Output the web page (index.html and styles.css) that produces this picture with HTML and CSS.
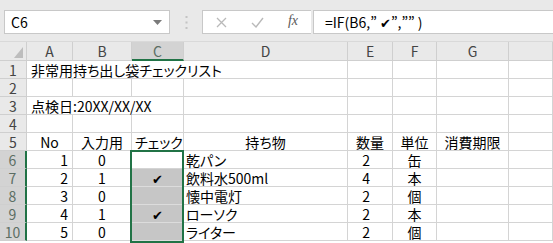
FILE: index.html
```html
<!DOCTYPE html>
<html lang="ja">

<head>
    <meta charset="UTF-8" />
    <title>非常用持ち出し袋チェックリスト</title>
    <link rel="stylesheet" href="styles.css">
</head>

<body>
    <div class="topbar">
        <div class="namebox">
            <span>C6</span>
            <svg width="9" height="5" viewBox="0 0 9 5"><path d="M0 0h9L4.5 5z" fill="#7a7a7a" /></svg>
        </div>
        <div class="grip">
            <svg width="3" height="13" viewBox="0 0 3 13">
                <rect x="0.5" y="0" width="2" height="2" fill="#c4c4c4" />
                <rect x="0.5" y="5.5" width="2" height="2" fill="#c4c4c4" />
                <rect x="0.5" y="11" width="2" height="2" fill="#c4c4c4" />
            </svg>
        </div>
        <div class="tools">
            <span class="tool">
                <svg width="11" height="11" viewBox="0 0 11 11"><path d="M1 1l9 9M10 1l-9 9" stroke="#b9b9b9" stroke-width="1.3" fill="none" /></svg>
            </span>
            <span class="tool">
                <svg width="13" height="11" viewBox="0 0 13 11"><path d="M1 6l4 4 7-9" stroke="#b9b9b9" stroke-width="1.4" fill="none" /></svg>
            </span>
            <span class="tool fx">fx</span>
        </div>
        <div class="formula">=IF(B6,” <span class="chk">✔</span>”,”” )</div>
    </div>

    <div class="sheet">
        <!-- column headers -->
        <div class="corner">
            <svg width="9" height="11" viewBox="0 0 9 11"><path d="M9 0v11H0z" fill="#bdbdbd" /></svg>
        </div>
        <div class="ch">A</div>
        <div class="ch">B</div>
        <div class="ch on">C</div>
        <div class="ch">D</div>
        <div class="ch">E</div>
        <div class="ch">F</div>
        <div class="ch">G</div>
        <div class="ch"></div>

        <!-- 1 -->
        <div class="rh">1</div>
        <div class="c span4">非常用持ち出し袋チェックリスト</div>
        <div class="c"></div><div class="c"></div><div class="c"></div><div class="c"></div>

        <!-- 2 -->
        <div class="rh">2</div>
        <div class="c"></div><div class="c"></div><div class="c"></div><div class="c"></div>
        <div class="c"></div><div class="c"></div><div class="c"></div><div class="c"></div>

        <!-- 3 -->
        <div class="rh">3</div>
        <div class="c span3">点検日:20XX/XX/XX</div>
        <div class="c"></div><div class="c"></div><div class="c"></div><div class="c"></div><div class="c"></div>

        <!-- 4 -->
        <div class="rh">4</div>
        <div class="c"></div><div class="c"></div><div class="c"></div><div class="c"></div>
        <div class="c"></div><div class="c"></div><div class="c"></div><div class="c"></div>

        <!-- 5 -->
        <div class="rh">5</div>
        <div class="c m">No</div>
        <div class="c m">入力用</div>
        <div class="c m">チェック</div>
        <div class="c m">持ち物</div>
        <div class="c m">数量</div>
        <div class="c m">単位</div>
        <div class="c m">消費期限</div>
        <div class="c"></div>

        <!-- 6 -->
        <div class="rh on">6</div>
        <div class="c r">1</div>
        <div class="c m">0</div>
        <div class="c m"></div>
        <div class="c l">乾パン</div>
        <div class="c num">2</div>
        <div class="c m">缶</div>
        <div class="c"></div><div class="c"></div>

        <!-- 7 -->
        <div class="rh on">7</div>
        <div class="c r">2</div>
        <div class="c m">1</div>
        <div class="c m sel"><span class="chk">✔</span></div>
        <div class="c l">飲料水500ml</div>
        <div class="c num">4</div>
        <div class="c m">本</div>
        <div class="c"></div><div class="c"></div>

        <!-- 8 -->
        <div class="rh on">8</div>
        <div class="c r">3</div>
        <div class="c m">0</div>
        <div class="c m sel"></div>
        <div class="c l">懐中電灯</div>
        <div class="c num">2</div>
        <div class="c m">個</div>
        <div class="c"></div><div class="c"></div>

        <!-- 9 -->
        <div class="rh on">9</div>
        <div class="c r">4</div>
        <div class="c m">1</div>
        <div class="c m sel"><span class="chk">✔</span></div>
        <div class="c l">ローソク</div>
        <div class="c num">2</div>
        <div class="c m">本</div>
        <div class="c"></div><div class="c"></div>

        <!-- 10 -->
        <div class="rh on">10</div>
        <div class="c r">5</div>
        <div class="c m">0</div>
        <div class="c m sel"></div>
        <div class="c l">ライター</div>
        <div class="c num">2</div>
        <div class="c m">個</div>
        <div class="c"></div><div class="c"></div>

        <!-- selected range C6:C10 -->
        <div class="range"></div>
    </div>
</body>

</html>
```

FILE: styles.css
```css
* {
    margin: 0;
    padding: 0;
    box-sizing: border-box;
}

body {
    width: 553px;
    height: 243px;
    overflow: hidden;
    background: #ffffff;
    font-family: 'Noto Sans CJK JP', sans-serif;
    font-size: 14px;
    font-feature-settings: "palt";
    color: #000000;
}

/* formula bar */
.topbar {
    height: 42px;
    display: flex;
    align-items: flex-start;
    padding: 10px 0 0 4px;
    background: #e9e9e9;
    border-bottom: 1px solid #d9d9d9;
}

.namebox {
    width: 166px;
    height: 24px;
    display: flex;
    align-items: center;
    justify-content: space-between;
    padding: 0 7px 0 6px;
    background: #ffffff;
    border: 1px solid #c8c8c8;
    line-height: 22px;
}

.grip {
    width: 32px;
    height: 24px;
    display: flex;
    align-items: center;
    justify-content: center;
}

.tools {
    width: 109px;
    height: 24px;
    display: flex;
    background: #ffffff;
    border: 1px solid #c8c8c8;
    border-right: none;
}

.tool {
    width: 36px;
    display: flex;
    align-items: center;
    justify-content: center;
}

.fx {
    font-family: 'Liberation Serif', serif;
    font-style: italic;
    font-size: 14px;
    color: #5a5a5a;
    padding-bottom: 2px;
}

.formula {
    flex: 1;
    height: 24px;
    margin-left: 2px;
    padding-left: 11px;
    background: #ffffff;
    border: 1px solid #c8c8c8;
    border-right: none;
    line-height: 22px;
    white-space: nowrap;
}

.chk {
    font-family: 'DejaVu Sans', sans-serif;
    font-size: 13px;
}

/* worksheet */
.sheet {
    position: relative;
    display: grid;
    grid-template-columns: 27px 46px 59px 52px 164px 45px 44px 72px 1fr;
    grid-template-rows: 19px repeat(10, 18px);
}

.corner,
.ch,
.rh {
    background: #e9e9e9;
    color: #444444;
    border-right: 1px solid #cfcfcf;
    border-bottom: 1px solid #cfcfcf;
}

.corner {
    display: flex;
    align-items: flex-end;
    justify-content: flex-end;
    padding: 0 3px 2px 0;
}

.ch {
    text-align: center;
    line-height: 17px;
    padding-top: 1px;
}

.rh {
    text-align: center;
    line-height: 16px;
    padding-top: 1px;
}

.ch.on {
    background: #d3d3d3;
    color: #5c6e63;
    border-bottom: 2px solid #217346;
}

.rh.on {
    background: #d3d3d3;
    color: #5c6e63;
    border-right: 2px solid #217346;
}

.c {
    border-right: 1px solid #d4d4d4;
    border-bottom: 1px solid #d4d4d4;
    line-height: 16px;
    padding: 1px 3px 0;
    white-space: nowrap;
}

.span4 {
    grid-column: span 4;
    padding-left: 4px;
}

.span3 {
    grid-column: span 3;
    padding-left: 4px;
}

.r {
    text-align: right;
    padding-right: 4px;
}

.m {
    text-align: center;
}

.l {
    padding-left: 2px;
}

.num {
    text-align: right;
    padding-right: 22px;
}

.sel {
    background: #c6c6c6;
    border-bottom-color: #dcdcdc;
}

/* selection outline sits on top of the cells */
.range {
    position: absolute;
    grid-column: 4 / 5;
    grid-row: 7 / 12;
    top: -1px;
    bottom: -2px;
    left: -2px;
    right: 0;
    border: 2px solid #217346;
    pointer-events: none;
}
```
